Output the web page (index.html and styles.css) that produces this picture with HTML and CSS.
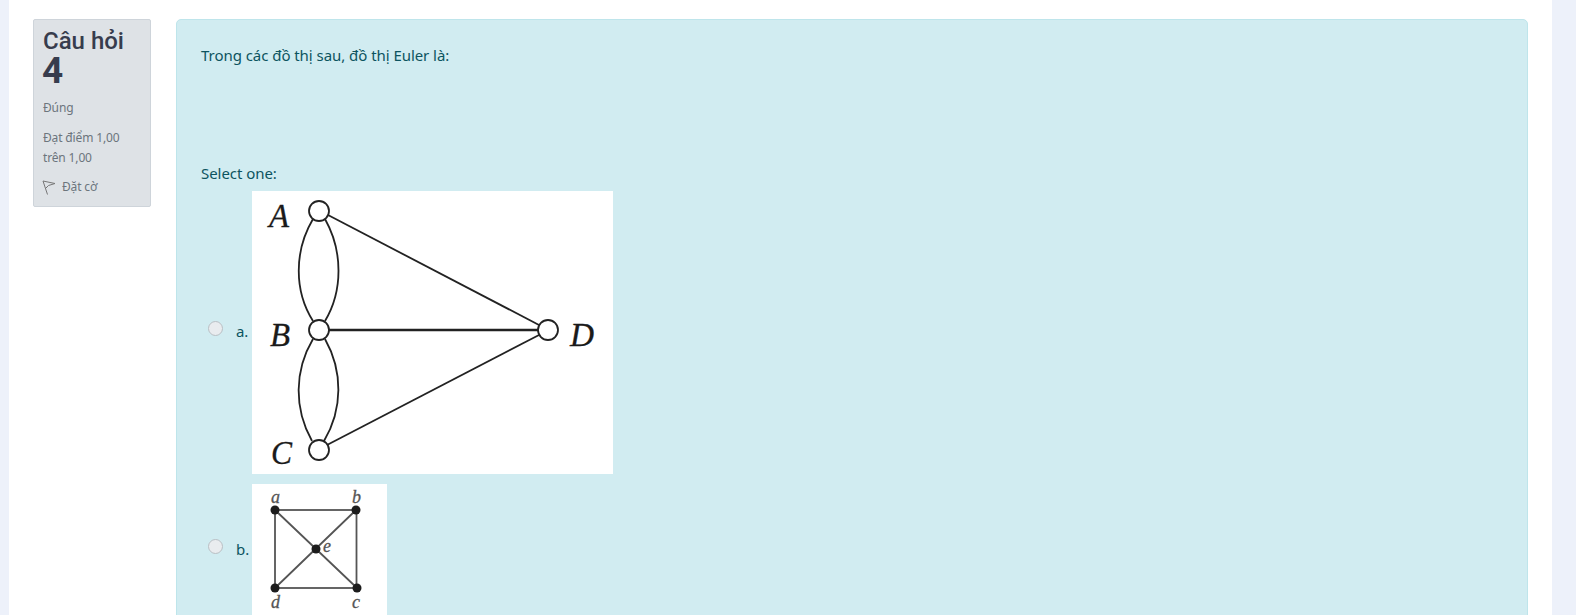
FILE: index.html
```html
<!DOCTYPE html>
<html lang="vi">
  <head>
    <meta charset="utf-8">
    <title>Câu hỏi 4</title>
    <meta name="viewport" content="width=device-width">
    <link rel="stylesheet" href="styles.css">
  </head>
  <body>
    <div class="page">
      <!-- question info -->
      <aside class="info">
        <h3 class="qno">Câu hỏi <span class="qnum">4</span></h3>
        <div class="state">Đúng</div>
        <div class="grade">Đạt điểm 1,00 trên 1,00</div>
        <div class="flag">
          <svg class="flag-icon" width="14" height="15" viewBox="0 0 14 15">
            <path d="M1 1 L5.500 14.500 M1 1 L13 3.500 L6.500 5.500 L3.500 8.500" fill="none" stroke="#777" stroke-width="1"/>
          </svg>
          <span>Đặt cờ</span>
        </div>
      </aside>

      <!-- question body -->
      <main class="question">
        <p class="qtext">Trong các đồ thị sau, đồ thị Euler là:</p>
        <div class="prompt">Select one:</div>
        <div class="answers">
          <label class="answer">
            <span class="radio"></span>
            <span class="letter">a.</span>
            <svg class="pic" width="361" height="283" viewBox="0 0 361 283">
              <rect width="361" height="283" fill="#fff"/>
              <g fill="none" stroke="#222" stroke-width="1.800">
                <path d="M61 28 C42 60 42 100 61 130"/>
                <path d="M73 28 C91 60 91 100 73 130"/>
                <path d="M61 148 C42 180 42 218 60 250"/>
                <path d="M73 148 C91 180 91 218 72 250"/>
                <path d="M76 24 L287 134"/>
                <path d="M77 139 L286 139" stroke-width="2.600"/>
                <path d="M75 254 L287 144"/>
                <circle cx="67" cy="20" r="10" fill="#fff"/>
                <circle cx="67" cy="139" r="10" fill="#fff"/>
                <circle cx="67" cy="259" r="10" fill="#fff"/>
                <circle cx="296" cy="139" r="10" fill="#fff"/>
              </g>
              <g class="pic-big">
                <text x="17" y="36" textLength="20" lengthAdjust="spacingAndGlyphs">A</text>
                <text x="18" y="155" textLength="20" lengthAdjust="spacingAndGlyphs">B</text>
                <text x="19" y="273" textLength="21" lengthAdjust="spacingAndGlyphs">C</text>
                <text x="318" y="155" textLength="24" lengthAdjust="spacingAndGlyphs">D</text>
              </g>
            </svg>
          </label>
          <label class="answer">
            <span class="radio"></span>
            <span class="letter">b.</span>
            <svg class="pic" width="135" height="133" viewBox="0 0 135 133">
              <rect width="135" height="133" fill="#fff"/>
              <g fill="none" stroke="#555" stroke-width="1.800">
                <rect x="23" y="26" width="81.500" height="78"/>
                <path d="M23 26 L105 104 M104 26 L23 104"/>
              </g>
              <g fill="#1c1c1c">
                <circle cx="23" cy="26" r="4.500"/>
                <circle cx="104" cy="26" r="4.500"/>
                <circle cx="105" cy="104" r="4.500"/>
                <circle cx="23" cy="104" r="4.500"/>
                <circle cx="64" cy="65" r="4.500"/>
              </g>
              <g class="pic-small">
                <text x="19" y="19">a</text>
                <text x="100" y="19">b</text>
                <text x="19" y="124">d</text>
                <text x="100" y="124">c</text>
                <text x="71" y="68">e</text>
              </g>
            </svg>
          </label>
        </div>
      </main>
    </div>
  </body>
</html>
```

FILE: styles.css
```css
html, body {
  height: 100%;
  overflow: hidden;
}

body {
  background-color: #edf1fa;
  font-family: "Noto Sans", sans-serif;
  margin: 0;
  padding: 0 24px 0 9px;
  box-sizing: border-box;
}

.page {
  display: flex;
  align-items: flex-start;
  gap: 25px;
  height: 100%;
  background-color: #fff;
  padding: 19px 24px 0 24px;
  box-sizing: border-box;
}

/* left box */
.info {
  flex: 0 0 118px;
  box-sizing: border-box;
  height: 188px;
  padding: 10px 9px;
  background-color: #dee2e6;
  border: 1px solid #ced4da;
  border-radius: 2px;
  color: #6c757d;
  font-size: 12px;
  letter-spacing: -0.15px;
}

.qno {
  margin: 0;
  font-family: Roboto, sans-serif;
  font-size: 24px;
  font-weight: 500;
  line-height: 22px;
  letter-spacing: 0;
  color: #373c4d;
}

.qnum {
  display: block;
  margin-left: -1px;
  font-size: 37px;
  font-weight: 700;
  line-height: 37px;
}

.state {
  margin-top: 9px;
  line-height: 20px;
}

.grade {
  margin-top: 10px;
  line-height: 20px;
}

.flag {
  display: flex;
  align-items: center;
  gap: 6px;
  margin: 9px 0 0 -1px;
  line-height: 20px;
}

.flag-icon {
  flex: none;
}

/* right box */
.question {
  flex: 1;
  height: 900px;
  box-sizing: border-box;
  padding: 23px 24px;
  background-color: #d1ecf1;
  border: 1px solid #bee5eb;
  border-radius: 5px;
  color: #0c5460;
  font-size: 15px;
  line-height: 24px;
  letter-spacing: -0.05px;
}

.qtext {
  margin: 0 0 94px;
}

.prompt {
  margin-bottom: 6px;
}

.answers {
  display: flex;
  flex-direction: column;
  gap: 10px;
}

.answer {
  display: flex;
  align-items: center;
}

.radio {
  flex: none;
  width: 15px;
  height: 15px;
  margin: -8px 13px 0 7px;
  box-sizing: border-box;
  background-color: #e9ecef;
  border: 1px solid #b9bfc4;
  border-radius: 50%;
}

.letter {
  flex: none;
  width: 16px;
  margin-top: -4px;
}

.pic {
  display: block;
  flex: none;
}

.pic-big {
  font-family: "Liberation Serif", serif;
  font-style: italic;
  font-size: 34px;
  fill: #1a1a1a;
  stroke: #1a1a1a;
  stroke-width: 0.3px;
}

.pic-small {
  font-family: "Liberation Serif", serif;
  font-style: italic;
  font-size: 18px;
  fill: #555;
  stroke: #555;
  stroke-width: 0.3px;
}
```
